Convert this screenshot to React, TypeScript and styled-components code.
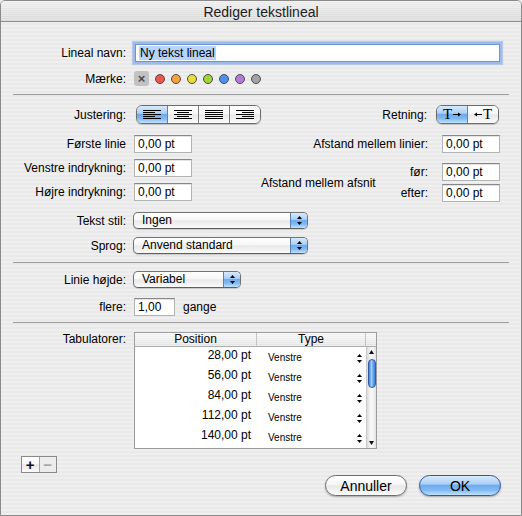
import React from 'react';
import styled, { createGlobalStyle, css } from 'styled-components';

const GlobalStyle = createGlobalStyle`
  html, body {
    margin: 0;
    padding: 0;
    background: #ececec;
  }
`;

const aquaBlue = css`
  background: linear-gradient(to bottom, #d8e9fc 0%, #acd0f6 42%, #6eaaee 50%, #83bcf4 76%, #c2e2fd 100%);
`;

const aquaWhite = css`
  background: linear-gradient(to bottom, #ffffff 0%, #f7f7f7 44%, #e9e9e9 52%, #f2f2f2 80%, #fcfcfc 100%);
`;

const Window = styled.div`
  width: 522px;
  height: 516px;
  box-sizing: border-box;
  border: 1px solid #8a8a8a;
  border-radius: 5px 5px 0 0;
  background: repeating-linear-gradient(to bottom, #efefef 0px, #efefef 2px, #e9e9e9 2px, #e9e9e9 4px);
  display: flex;
  flex-direction: column;
  overflow: hidden;
  font-family: "Liberation Sans", Arial, sans-serif;
  font-size: 12px;
  line-height: 14px;
  color: #000;
`;

const TitleBar = styled.div`
  flex: none;
  height: 21px;
  box-sizing: border-box;
  padding-top: 2px;
  border-bottom: 1px solid #8e8e8e;
  display: flex;
  align-items: center;
  justify-content: center;
  font-size: 14px;
  color: #1c1c1c;
  background:
    repeating-linear-gradient(to bottom, rgba(255, 255, 255, 0.35) 0px, rgba(255, 255, 255, 0.35) 1px, transparent 1px, transparent 2px),
    linear-gradient(to bottom, #ececec, #d8d8d8);
`;

const Content = styled.div`
  padding: 0 12px;
  display: flex;
  flex-direction: column;
`;

const FormRow = styled.div<{ $top: number; $start?: boolean }>`
  display: grid;
  grid-template-columns: 113px 1fr;
  column-gap: 7px;
  align-items: ${p => (p.$start ? 'start' : 'center')};
  margin-top: ${p => p.$top}px;
`;

const Label = styled.div`
  text-align: right;
  white-space: nowrap;
`;

const Separator = styled.div<{ $top: number }>`
  height: 1px;
  background: #9c9c9c;
  margin-top: ${p => p.$top}px;
`;

const TextField = styled.div<{ $w: number; $focus?: boolean; $ml?: number }>`
  width: ${p => p.$w}px;
  height: 18px;
  box-sizing: border-box;
  margin-left: ${p => p.$ml ?? 0}px;
  padding: 0 3px;
  background: #fff;
  border: 1px solid #b3b3b3;
  border-top-color: #878787;
  box-shadow: inset 0 1px 0 #e2e2e2;
  line-height: 16px;
  white-space: nowrap;
  ${p =>
    p.$focus &&
    css`
      border-color: #6f94cc;
      box-shadow: 0 0 0 2px #9cbdeb, 0 0 1px 3px rgba(120, 160, 220, 0.45);
    `}
`;

const Selected = styled.span`
  background: #b5d3fb;
  padding: 0 1px;
`;

const Markers = styled.div`
  display: flex;
  align-items: center;
  gap: 6px;
  margin-left: 1px;
  height: 15px;
`;

const ClearMark = styled.div`
  width: 15px;
  height: 15px;
  border-radius: 3px;
  background: #c2c2c2;
  color: #4a4a4a;
  font-weight: bold;
  font-size: 13px;
  line-height: 15px;
  text-align: center;
  margin-right: 0;
`;

const Dot = styled.div<{ $c: string }>`
  width: 10px;
  height: 10px;
  box-sizing: border-box;
  border-radius: 50%;
  border: 1px solid #4e4e4e;
  background: ${p => p.$c};
`;

const ToolRow = styled.div`
  display: flex;
  justify-content: space-between;
  align-items: center;
  margin-top: 10px;
`;

const ToolGroup = styled.div`
  display: grid;
  grid-template-columns: 113px auto;
  column-gap: 10px;
  align-items: center;
`;

const RightToolGroup = styled.div`
  display: flex;
  align-items: center;
  gap: 9px;
  margin-right: 10px;
`;

const Segmented = styled.div<{ $w: number }>`
  width: ${p => p.$w}px;
  height: 19px;
  box-sizing: border-box;
  display: flex;
  border: 1px solid #6c6c6c;
  border-radius: 6px;
  overflow: hidden;
  box-shadow: 0 1px 1px rgba(0, 0, 0, 0.18);
`;

const Segment = styled.div<{ $on?: boolean }>`
  flex: 1;
  box-sizing: border-box;
  display: flex;
  align-items: center;
  justify-content: center;
  ${p => (p.$on ? aquaBlue : aquaWhite)};
  & + & {
    border-left: 1px solid #7d7d7d;
  }
`;

const SerifGlyph = styled.span`
  font-family: "Liberation Serif", "Times New Roman", serif;
  font-size: 15px;
  line-height: 15px;
  display: flex;
  align-items: center;
  gap: 1px;
`;

const Fields = styled.div`
  display: flex;
  justify-content: space-between;
  margin-top: 11px;
`;

const LeftFields = styled.div`
  display: grid;
  grid-template-columns: 113px 58px;
  grid-template-rows: 18px 18px 18px;
  column-gap: 8px;
  row-gap: 6px;
`;

const FieldLabel = styled.div`
  text-align: right;
  white-space: nowrap;
  line-height: 18px;
`;

const RightFields = styled.div`
  display: grid;
  grid-template-columns: auto auto 58px;
  grid-template-rows: 28px 21px 18px;
  align-items: start;
  margin-right: 9px;
`;

const SpanLabel = styled(FieldLabel)<{ $col: string; $row: string }>`
  grid-column: ${p => p.$col};
  grid-row: ${p => p.$row};
  padding-right: 14px;
`;

const GroupLabel = styled.div`
  grid-column: 1;
  grid-row: 2 / 4;
  align-self: center;
  margin-right: 25px;
  white-space: nowrap;
`;

const PopUp = styled.div<{ $w: number }>`
  width: ${p => p.$w}px;
  height: 17px;
  box-sizing: border-box;
  border: 1px solid #737373;
  border-bottom-color: #5e5e5e;
  border-radius: 5px;
  display: flex;
  overflow: hidden;
  ${aquaWhite};
  box-shadow: 0 1px 1px rgba(0, 0, 0, 0.15);
`;

const PopUpText = styled.div`
  flex: 1;
  padding-left: 8px;
  line-height: 15px;
  white-space: nowrap;
`;

const PopUpCap = styled.div`
  width: 16px;
  display: flex;
  align-items: center;
  justify-content: center;
  border-left: 1px solid #5d7fb8;
  ${aquaBlue};
`;

const Inline = styled.div`
  display: flex;
  align-items: center;
  gap: 8px;
`;

const Table = styled.div`
  width: 243px;
  height: 117px;
  box-sizing: border-box;
  border: 1px solid #9d9d9d;
  background: #fff;
  display: grid;
  grid-template-columns: 122px 109px 10px;
  grid-template-rows: 14px 101px;
  margin-left: 1px;
`;

const HeaderCell = styled.div<{ $last?: boolean }>`
  box-sizing: border-box;
  border-bottom: 1px solid #acacac;
  border-right: ${p => (p.$last ? 'none' : '1px solid #c4c4c4')};
  text-align: center;
  line-height: 13px;
  background:
    repeating-linear-gradient(to bottom, rgba(255, 255, 255, 0.4) 0px, rgba(255, 255, 255, 0.4) 1px, transparent 1px, transparent 2px),
    linear-gradient(to bottom, #f6f6f6, #e3e3e3);
`;

const Rows = styled.div`
  grid-column: 1 / 3;
  display: grid;
  grid-template-columns: 122px 109px;
  grid-auto-rows: 20px;
  overflow: hidden;
`;

const PosCell = styled.div`
  text-align: right;
  padding-right: 6px;
  line-height: 16px;
`;

const TypeCell = styled.div`
  display: flex;
  justify-content: space-between;
  align-items: center;
  height: 16px;
  margin-top: 3px;
  padding: 0 4px 0 11px;
  font-size: 10px;
  line-height: 16px;
`;

const ScrollBar = styled.div`
  display: flex;
  flex-direction: column;
  align-items: center;
  box-sizing: border-box;
  border-left: 1px solid #c9c9c9;
  background: linear-gradient(to right, #dcdcdc, #f9f9f9 45%, #f3f3f3 70%, #e2e2e2);
`;

const ScrollArrow = styled.div`
  height: 10px;
  width: 100%;
  display: flex;
  align-items: center;
  justify-content: center;
  flex: none;
`;

const Thumb = styled.div`
  width: 8px;
  height: 29px;
  margin-top: 2px;
  border-radius: 4px;
  box-sizing: border-box;
  border: 1px solid #2f5ea8;
  background: linear-gradient(to right, #3c77d4, #a9d0f8 40%, #6aa6ee 65%, #3f7fdc);
  flex: none;
`;

const Track = styled.div`
  flex: 1;
`;

const AddRemove = styled.div`
  display: flex;
  width: 36px;
  height: 17px;
  box-sizing: border-box;
  margin-top: 7px;
  margin-left: 8px;
  border: 1px solid #8a8a8a;
  ${aquaWhite};
`;

const SmallButton = styled.div<{ $disabled?: boolean }>`
  flex: 1;
  display: flex;
  align-items: center;
  justify-content: center;
  font-size: 15px;
  font-weight: bold;
  line-height: 15px;
  color: ${p => (p.$disabled ? '#a6a6a6' : '#111')};
  background: ${p => (p.$disabled ? '#ececec' : 'transparent')};
  & + & {
    border-left: 1px solid #a5a5a5;
  }
`;

const ButtonRow = styled.div`
  display: flex;
  justify-content: flex-end;
  gap: 12px;
  margin-top: 2px;
  padding-right: 8px;
`;

const PushButton = styled.div<{ $default?: boolean }>`
  width: 82px;
  height: 21px;
  box-sizing: border-box;
  border-radius: 11px;
  border: 1px solid ${p => (p.$default ? '#32579a' : '#6d6d6d')};
  display: flex;
  align-items: center;
  justify-content: center;
  font-size: 14px;
  line-height: 16px;
  box-shadow: 0 1px 2px rgba(0, 0, 0, 0.3);
  ${p => (p.$default ? aquaBlue : aquaWhite)};
`;

const Stepper = ({ color = '#000' }: { color?: string }) => (
  <svg width="5" height="9" viewBox="0 0 5 9">
    <path d="M2.5 0 L5 3 L0 3 Z" fill={color} />
    <path d="M0 6 L5 6 L2.5 9 Z" fill={color} />
  </svg>
);

const Triangle = ({ up }: { up?: boolean }) => (
  <svg width="5" height="4" viewBox="0 0 5 4">
    <path d={up ? 'M2.5 0 L5 4 L0 4 Z' : 'M0 0 L5 0 L2.5 4 Z'} fill="#111" />
  </svg>
);

const AlignIcon = ({ kind }: { kind: 'left' | 'center' | 'justify' | 'right' }) => (
  <svg width="18" height="9" viewBox="0 0 18 9">
    {[0, 1, 2, 3, 4].map(i => {
      const w = kind === 'justify' || i % 2 === 0 ? 18 : 12;
      const x = kind === 'center' ? (18 - w) / 2 : kind === 'right' ? 18 - w : 0;
      return <rect key={i} x={x} y={i * 2} width={w} height={1} fill="#000" />;
    })}
  </svg>
);

const Arrow = ({ left }: { left?: boolean }) => (
  <svg width="8" height="5" viewBox="0 0 8 5">
    {left ? (
      <path d="M0 2.5 L3 0.5 L3 2 L8 2 L8 3 L3 3 L3 4.5 Z" fill="#000" />
    ) : (
      <path d="M8 2.5 L5 0.5 L5 2 L0 2 L0 3 L5 3 L5 4.5 Z" fill="#000" />
    )}
  </svg>
);

const App: React.FC = () => {
  const markers = ['#f2524c', '#f6a13a', '#ecdc36', '#a4d23a', '#4b90ec', '#b57ad8', '#a3a3a3'];
  const tabs = ['28,00 pt', '56,00 pt', '84,00 pt', '112,00 pt', '140,00 pt'];

  return (
    <>
      <GlobalStyle />
      <Window>
        <TitleBar>Rediger tekstlineal</TitleBar>
        <Content>
          <FormRow $top={22}>
            <Label>Lineal navn:</Label>
            <TextField $w={365} $ml={2} $focus>
              <Selected>Ny tekst lineal</Selected>
            </TextField>
          </FormRow>
          <FormRow $top={9}>
            <Label>Mærke:</Label>
            <Markers>
              <ClearMark>×</ClearMark>
              {markers.map(c => (
                <Dot key={c} $c={c} />
              ))}
            </Markers>
          </FormRow>

          <Separator $top={8} />

          <ToolRow>
            <ToolGroup>
              <Label>Justering:</Label>
              <Segmented $w={125}>
                <Segment $on>
                  <AlignIcon kind="left" />
                </Segment>
                <Segment>
                  <AlignIcon kind="center" />
                </Segment>
                <Segment>
                  <AlignIcon kind="justify" />
                </Segment>
                <Segment>
                  <AlignIcon kind="right" />
                </Segment>
              </Segmented>
            </ToolGroup>
            <RightToolGroup>
              <Label>Retning:</Label>
              <Segmented $w={63}>
                <Segment $on>
                  <SerifGlyph>
                    T<Arrow />
                  </SerifGlyph>
                </Segment>
                <Segment>
                  <SerifGlyph>
                    <Arrow left />T
                  </SerifGlyph>
                </Segment>
              </Segmented>
            </RightToolGroup>
          </ToolRow>

          <Fields>
            <LeftFields>
              <FieldLabel>Første linie</FieldLabel>
              <TextField $w={58}>0,00 pt</TextField>
              <FieldLabel>Venstre indrykning:</FieldLabel>
              <TextField $w={58}>0,00 pt</TextField>
              <FieldLabel>Højre indrykning:</FieldLabel>
              <TextField $w={58}>0,00 pt</TextField>
            </LeftFields>
            <RightFields>
              <SpanLabel $col="1 / 3" $row="1">Afstand mellem linier:</SpanLabel>
              <TextField $w={58} style={{ gridColumn: 3, gridRow: 1 }}>0,00 pt</TextField>
              <GroupLabel>Afstand mellem afsnit</GroupLabel>
              <SpanLabel $col="2" $row="2">før:</SpanLabel>
              <TextField $w={58} style={{ gridColumn: 3, gridRow: 2 }}>0,00 pt</TextField>
              <SpanLabel $col="2" $row="3">efter:</SpanLabel>
              <TextField $w={58} style={{ gridColumn: 3, gridRow: 3 }}>0,00 pt</TextField>
            </RightFields>
          </Fields>

          <FormRow $top={10}>
            <Label>Tekst stil:</Label>
            <PopUp $w={175}>
              <PopUpText>Ingen</PopUpText>
              <PopUpCap>
                <Stepper />
              </PopUpCap>
            </PopUp>
          </FormRow>
          <FormRow $top={8}>
            <Label>Sprog:</Label>
            <PopUp $w={175}>
              <PopUpText>Anvend standard</PopUpText>
              <PopUpCap>
                <Stepper />
              </PopUpCap>
            </PopUp>
          </FormRow>

          <Separator $top={8} />

          <FormRow $top={8}>
            <Label>Linie højde:</Label>
            <PopUp $w={108}>
              <PopUpText>Variabel</PopUpText>
              <PopUpCap>
                <Stepper />
              </PopUpCap>
            </PopUp>
          </FormRow>
          <FormRow $top={10}>
            <Label>flere:</Label>
            <Inline>
              <TextField $w={41} $ml={1}>1,00</TextField>
              <span>gange</span>
            </Inline>
          </FormRow>

          <Separator $top={6} />

          <FormRow $top={9} $start>
            <Label>Tabulatorer:</Label>
            <Table>
              <HeaderCell>Position</HeaderCell>
              <HeaderCell>Type</HeaderCell>
              <HeaderCell $last />
              <Rows>
                {tabs.map(t => (
                  <React.Fragment key={t}>
                    <PosCell>{t}</PosCell>
                    <TypeCell>
                      <span>Venstre</span>
                      <Stepper />
                    </TypeCell>
                  </React.Fragment>
                ))}
              </Rows>
              <ScrollBar>
                <ScrollArrow>
                  <Triangle up />
                </ScrollArrow>
                <Thumb />
                <Track />
                <ScrollArrow>
                  <Triangle />
                </ScrollArrow>
              </ScrollBar>
            </Table>
          </FormRow>

          <AddRemove>
            <SmallButton>+</SmallButton>
            <SmallButton $disabled>−</SmallButton>
          </AddRemove>

          <ButtonRow>
            <PushButton>Annuller</PushButton>
            <PushButton $default>OK</PushButton>
          </ButtonRow>
        </Content>
      </Window>
    </>
  );
};

export default App;
